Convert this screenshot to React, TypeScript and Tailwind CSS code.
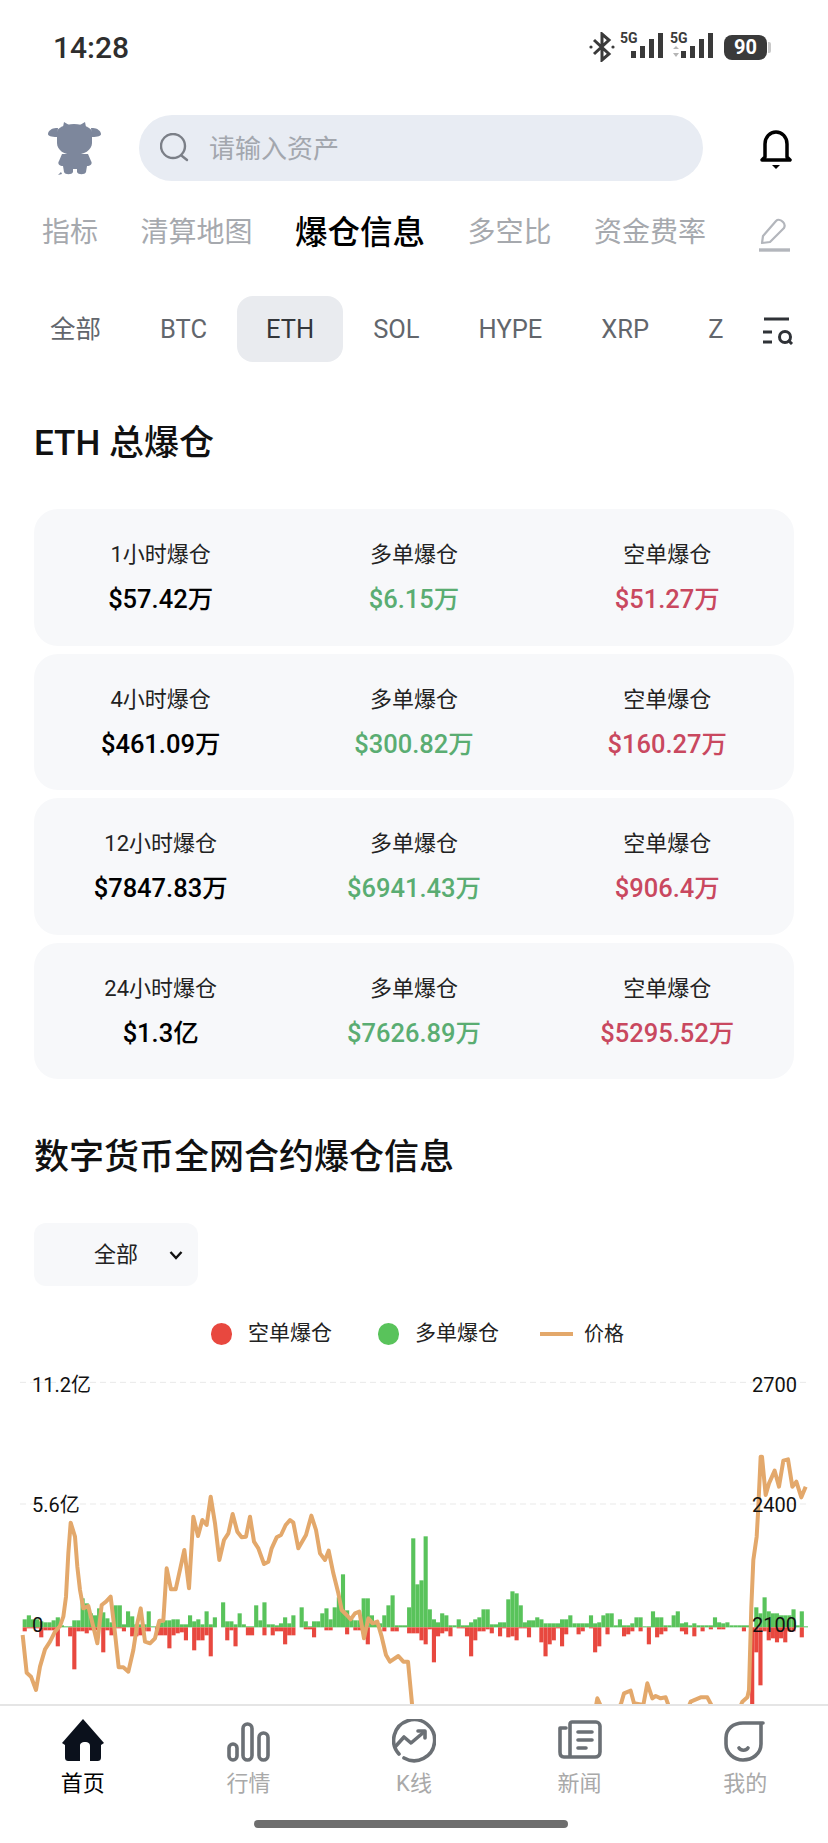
const greenBars = [
  8, 12, 8, 8, 6, 5, 5, 7, 10, 2, 1, 1, 7, 7, 29, 24, 14, 12, 19, 15, 9, 5, 22, 22, 3, 16, 11, 3, 3, 3, 16, 1, 1, 5, 7, 7, 8, 8, 3, 3, 12, 6, 8, 3, 16, 3, 10, 0,
  25, 6, 6, 3, 14, 3, 1, 1, 22, 7, 25, 3, 3, 2, 4, 10, 4, 12, 0, 20, 6, 1, 6, 6, 14, 19, 8, 20, 30, 53, 17, 8, 7, 7, 29, 29, 12, 4, 4, 12, 22, 32, 2, 2, 2, 20, 89,
  43, 47, 91, 18, 8, 5, 14, 12, 2, 2, 8, 2, 2, 5, 8, 10, 18, 18, 3, 3, 5, 5, 28, 36, 34, 22, 5, 7, 7, 10, 8, 4, 4, 4, 4, 8, 8, 12, 4, 4, 4, 4, 12, 4, 5, 12, 14, 14,
  2, 8, 2, 2, 4, 10, 10, 1, 1, 16, 10, 10, 2, 2, 12, 16, 4, 5, 2, 4, 2, 2, 2, 2, 10, 5, 4, 5, 2, 2, 2, 2, 2, 0, 20, 14, 30, 16, 14, 14, 12, 12, 12, 18, 2, 16, 1,
];

const redBars = [
  4, 1, 1, 1, 10, 3, 3, 3, 19, 0, 0, 9, 42, 4, 4, 6, 3, 3, 0, 25, 3, 8, 1, 1, 4, 0, 9, 9, 8, 4, 4, 0, 8, 8, 8, 21, 8, 6, 5, 13, 0, 23, 13, 13, 8, 29, 0, 0,
  0, 13, 3, 19, 0, 0, 8, 8, 0, 0, 8, 0, 8, 4, 4, 17, 8, 8, 0, 0, 2, 2, 10, 0, 0, 3, 3, 0, 0, 0, 7, 0, 3, 3, 6, 17, 0, 0, 0, 4, 0, 4, 4, 0, 0, 6, 6,
  6, 13, 17, 2, 35, 9, 6, 4, 9, 0, 1, 1, 9, 29, 13, 4, 4, 2, 6, 0, 9, 1, 10, 9, 13, 1, 1, 10, 0, 0, 15, 29, 17, 13, 1, 19, 7, 0, 0, 7, 4, 0, 1, 25, 19, 0, 7, 0,
  0, 0, 9, 7, 4, 0, 4, 0, 17, 0, 10, 7, 4, 0, 0, 0, 4, 7, 0, 9, 0, 4, 0, 2, 0, 2, 2, 0, 0, 0, 0, 4, 0, 90, 25, 58, 4, 13, 11, 15, 11, 15, 4, 4, 0, 10, 0,
];

const priceLine =
  "68,885 80,998 93,1010 108,1050 120,980 135,928 150,905 165,875 180,858 190,830 198,770 205,640 212,548 225,590 232,680 240,750 250,805 265,798 275,840 292,910 305,795 318,785 332,770 345,880 356,982 370,982 385,995 400,930 412,850 422,805 435,905 450,910 465,895 478,842 490,842 500,685 513,748 527,748 553,630 567,745 580,530 594,588 607,540 620,555 632,470 645,550 658,660 672,600 685,580 698,522 712,575 725,592 738,590 750,530 762,605 775,625 792,672 805,665 815,625 830,592 843,585 857,555 870,540 880,548 895,625 918,585 934,527 948,570 960,640 975,660 986,632 1000,700 1015,760 1025,810 1040,825 1052,838 1065,820 1078,815 1092,895 1105,835 1118,850 1132,845 1145,890 1158,945 1170,965 1195,948 1210,965 1224,965 1235,1080 1245,1200 1770,1200 1792,1075 1810,1115 1862,1095 1872,1060 1892,1052 1902,1090 1930,1095 1942,1030 1957,1075 1967,1068 1982,1075 1997,1072 2012,1115 2060,1115 2072,1085 2102,1072 2122,1072 2142,1110 2215,1115 2227,1085 2242,1072 2247,1050 2254,800 2260,660 2270,590 2274,520 2282,350 2286,350 2297,465 2307,430 2324,392 2337,440 2350,362 2364,358 2377,440 2389,425 2404,472 2417,440";

const summaryRows = [
  { label: "1小时爆仓", total: "$57.42万", long: "$6.15万", short: "$51.27万" },
  { label: "4小时爆仓", total: "$461.09万", long: "$300.82万", short: "$160.27万" },
  { label: "12小时爆仓", total: "$7847.83万", long: "$6941.43万", short: "$906.4万" },
  { label: "24小时爆仓", total: "$1.3亿", long: "$7626.89万", short: "$5295.52万" },
];

const topTabs = ["指标", "清算地图", "爆仓信息", "多空比", "资金费率"];
const coins = ["全部", "BTC", "ETH", "SOL", "HYPE", "XRP", "Z"];

function Signal({ arrows }: { arrows?: boolean }) {
  return (
    <div className="relative h-[30px] w-[43px]">
      <span className="absolute left-0 top-[-1px] text-[14px] leading-[14px] font-bold text-[#3a3a3a]">5G</span>
      <svg className="absolute left-0 top-0" width="43" height="30" viewBox="0 0 43 30" fill="#3a3a3a">
        {arrows && <path d="M3 17l3-3 3 3zM3 21h6l-3 4z" fill="#b5b5b5" />}
        <rect x="11" y="19" width="5" height="7" />
        <rect x="20" y="14" width="5" height="12" />
        <rect x="29" y="7" width="5" height="19" />
        <rect x="38" y="1" width="5" height="25" />
      </svg>
    </div>
  );
}

function StatusBar() {
  return (
    <div className="flex h-[94px] shrink-0 items-center justify-between pl-[53px] pr-[57px]">
      <span className="text-[30px] font-medium text-[#2e2e2e]">14:28</span>
      <div className="flex items-center">
        <svg width="26" height="30" viewBox="0 0 26 30" fill="none" stroke="#3a3a3a" strokeWidth="3">
          <path d="M5 8l15 14-7 6V2l7 6L5 22" />
          <circle cx="2" cy="15" r="1.6" fill="#3a3a3a" stroke="none" />
          <circle cx="24" cy="15" r="1.6" fill="#3a3a3a" stroke="none" />
        </svg>
        <div className="ml-[5px]">
          <Signal />
        </div>
        <div className="ml-[7px]">
          <Signal arrows />
        </div>
        <div className="ml-[11px] flex h-[25px] w-[43px] items-center justify-center rounded-[8px] bg-[#3a3a3a] text-[20px] font-bold text-white">
          90
        </div>
        <div className="ml-[1px] h-[11px] w-[3px] rounded-r-[2px] bg-[#c9c9c9]" />
      </div>
    </div>
  );
}

function Mascot() {
  return (
    <svg width="53" height="56" viewBox="0 0 53 56" fill="#7d879c">
      <path d="M15 7l1-5 5 3h11l5-3 1 5z" />
      <path d="M10 8h-2C4 8 0 11 0 14c0 2 3 3 9 3zM43 8h2c4 0 8 3 8 6 0 2-3 3-9 3z" />
      <path d="M9 12c0-4 8-8 17-8s18 4 18 8v11c0 7-8 12-18 12S9 30 9 23z" />
      <path d="M14 34h26l3 7c2 3-1 5-4 5l-1 6c-1 3-8 3-9 0v-3h-4v3c-1 3-8 3-9 0l-1-6c-3 0-6-2-4-5z" />
      <path d="M10 55l3-3 1 2z" />
    </svg>
  );
}

function SearchHeader() {
  return (
    <div className="mt-[21px] flex h-[66px] shrink-0 items-center pl-[48px]">
      <Mascot />
      <div className="ml-[38px] flex h-[66px] w-[564px] items-center rounded-full bg-[#e8ecf3] pl-[21px]">
        <svg width="30" height="30" viewBox="0 0 30 30" fill="none" stroke="#7b7f87" strokeWidth="2.4" strokeLinecap="round">
          <circle cx="13" cy="13" r="12" />
          <path d="M22 23l5 4" />
        </svg>
        <span className="ml-[19px] pt-[2px] text-[26px] text-[#a3a7ae]">请输入资产</span>
      </div>
      <svg className="ml-[56px] mt-[4px]" width="34" height="40" viewBox="0 0 34 40" fill="none" stroke="#000" strokeWidth="3.5" strokeLinejoin="round">
        <path d="M6 27V14C6 7 11 2 17 2s11 5 11 12v13l3 3H3z" />
        <path d="M13 35h8l-4 4z" fill="#000" stroke="none" />
      </svg>
    </div>
  );
}

function TopTabs() {
  return (
    <div className="mt-[32px] flex h-[40px] shrink-0 items-center pl-[42px]">
      <div className="flex items-center gap-[42.5px]">
        {topTabs.map((tab) =>
          tab === "爆仓信息" ? (
            <span key={tab} className="text-[32.5px] font-medium text-black">
              {tab}
            </span>
          ) : (
            <span key={tab} className="text-[28px] text-[#a6a9ae]">
              {tab}
            </span>
          ),
        )}
      </div>
      <svg className="ml-[52px] mt-[3px]" width="33" height="34" viewBox="0 0 33 34" fill="none" stroke="#b3b6bc" strokeWidth="2.2" strokeLinejoin="round">
        <path d="M4 25l1-7L18 3c2-2 5-1 7 1s2 4 1 6L12 24z" />
        <path d="M1 32h31" strokeWidth="3.4" />
      </svg>
    </div>
  );
}

function CoinChips() {
  return (
    <div className="mt-[43px] flex h-[66px] shrink-0 items-center pl-[21px] pr-[34px]">
      <div className="flex min-w-0 flex-1 items-center gap-[1px] overflow-hidden">
        {coins.map((coin) =>
          coin === "ETH" ? (
            <div key={coin} className="flex h-[66px] shrink-0 items-center rounded-[16px] bg-[#e9ebef] px-[29px] text-[25.5px] whitespace-nowrap text-[#33363a]">
              {coin}
            </div>
          ) : (
            <div key={coin} className="flex h-[66px] shrink-0 items-center px-[29px] text-[25.5px] whitespace-nowrap text-[#62666c]">
              {coin}
            </div>
          ),
        )}
      </div>
      <svg className="ml-[10px] mt-[3px] shrink-0" width="31" height="28" viewBox="0 0 31 28" fill="none" stroke="#2f3237" strokeWidth="3">
        <path d="M1 2h25M0 15h9M0 25h9" />
        <circle cx="22" cy="20" r="5.5" />
        <path d="M25 23l4 4" />
      </svg>
    </div>
  );
}

function SummaryCell({ label, value, color }: { label: string; value: string; color: string }) {
  return (
    <div className="flex flex-col items-center">
      <span className="text-[22px] leading-[30px] text-[#222]">{label}</span>
      <span className={`mt-[14px] text-[25.5px] leading-[30px] font-medium ${color}`}>{value}</span>
    </div>
  );
}

function SummaryCards() {
  return (
    <div className="mt-[41px] flex flex-col gap-[8px] px-[34px]">
      {summaryRows.map((row) => (
        <div key={row.label} className="grid h-[136.5px] grid-cols-3 items-center rounded-[24px] bg-[#f7f8fa]">
          <SummaryCell label={row.label} value={row.total} color="text-black" />
          <SummaryCell label="多单爆仓" value={row.long} color="text-[#5aad72]" />
          <SummaryCell label="空单爆仓" value={row.short} color="text-[#c9485f]" />
        </div>
      ))}
    </div>
  );
}

function Legend() {
  return (
    <div className="mt-[33px] flex h-[30px] shrink-0 items-center pl-[211px] text-[21px] text-[#222]">
      <span className="h-[22px] w-[21px] rounded-full bg-[#e8483f]" />
      <span className="ml-[16px]">空单爆仓</span>
      <span className="ml-[46px] h-[22px] w-[21px] rounded-full bg-[#59c35b]" />
      <span className="ml-[16px]">多单爆仓</span>
      <span className="ml-[41px] h-[4px] w-[33px] bg-[#e3a86b]" />
      <span className="ml-[11px] text-[20px]">价格</span>
    </div>
  );
}

function LiquidationChart() {
  return (
    <div className="relative mt-[11px] min-h-0 flex-1 overflow-hidden">
      <svg className="block" width="828" height="344" viewBox="0 60 2484 1032">
        <path d="M60 127H2422M60 492H2422" stroke="#e9e9e9" strokeWidth="3" strokeDasharray="18 12" />
        {greenBars.map((h, i) => (
          <rect key={i} x={68 + i * 12.4} y={862 - h * 3} width="12.4" height={h * 3} fill="#59c35b" />
        ))}
        {redBars.map((h, i) => (
          <rect key={i} x={68 + i * 12.4} y={862} width="12.4" height={h * 3} fill="#e8483f" />
        ))}
        <polyline points={priceLine} fill="none" stroke="#e3a86b" strokeWidth="12" strokeLinejoin="round" />
      </svg>
      <span className="absolute left-[32px] top-[11px] text-[20px] leading-[28px] text-[#111]">11.2亿</span>
      <span className="absolute left-[32px] top-[131px] text-[20px] leading-[28px] text-[#111]">5.6亿</span>
      <span className="absolute left-[32px] top-[251px] text-[20px] leading-[28px] text-[#111]">0</span>
      <span className="absolute left-[752px] top-[11px] text-[20px] leading-[28px] text-[#111]">2700</span>
      <span className="absolute left-[752px] top-[131px] text-[20px] leading-[28px] text-[#111]">2400</span>
      <span className="absolute left-[752px] top-[251px] text-[20px] leading-[28px] text-[#111]">2100</span>
    </div>
  );
}

const navItems = [
  {
    label: "首页",
    active: true,
    icon: (
      <path
        d="M22 0l21 24-3 2v12c0 3-1 4-4 4h-7V27c0-3-2-4-5-4s-5 1-5 4v15H8c-3 0-4-1-4-4V26l-3-2z"
        fill="#0b111c"
      />
    ),
  },
  {
    label: "行情",
    icon: (
      <g fill="none" stroke="#6b7075" strokeWidth="3.6">
        <rect x="3" y="25" width="8" height="16" rx="4" />
        <rect x="17" y="5" width="9" height="36" rx="4.5" />
        <rect x="33" y="14" width="9" height="27" rx="4.5" />
      </g>
    ),
  },
  {
    label: "K线",
    icon: (
      <g fill="none" stroke="#6b7075" strokeWidth="3.6" strokeLinecap="round" strokeLinejoin="round">
        <path d="M7 35A20.5 20.5 0 1 1 12 39" />
        <path d="M3 28l9-10 7 6 13-11" />
        <path d="M26 12h7v7" />
      </g>
    ),
  },
  {
    label: "新闻",
    icon: (
      <g fill="none" stroke="#6b7075" strokeWidth="3.6" strokeLinecap="round" strokeLinejoin="round">
        <path d="M12 38V5c0-1 1-2 2-2h24c2 0 4 2 4 4v26c0 3-2 5-5 5H6c-3 0-4-2-4-5V9h6" />
        <path d="M20 13h14M20 21h14M20 29h8" />
      </g>
    ),
  },
  {
    label: "我的",
    icon: (
      <g fill="none" stroke="#6b7075" strokeWidth="3.6" strokeLinecap="round">
        <path d="M40 4H20C10 4 3 10 3 19v6c0 9 8 16 17 16s18-6 18-16V4" />
        <path d="M16 29c2 3 7 3 9 0" />
      </g>
    ),
  },
];

function BottomNav() {
  return (
    <div className="h-[139px] shrink-0 border-t-2 border-[#e5e5e5] bg-white">
      <div className="grid grid-cols-5 pt-[13px]">
        {navItems.map((item) => (
          <div key={item.label} className="flex flex-col items-center">
            <svg width="44" height="44" viewBox="0 0 44 44">
              {item.icon}
            </svg>
            <span className={`mt-[6px] text-[22px] leading-[30px] ${item.active ? "text-black" : "text-[#a9a9a9]"}`}>
              {item.label}
            </span>
          </div>
        ))}
      </div>
      <div className="ml-[254px] mt-[21px] h-[8px] w-[314px] rounded-full bg-[#6e6e6e]" />
    </div>
  );
}

export default function App() {
  return (
    <div className="flex h-[1843px] w-[828px] flex-col overflow-hidden bg-white font-[Roboto,'Noto_Sans_CJK_SC',sans-serif]">
      <StatusBar />
      <SearchHeader />
      <TopTabs />
      <CoinChips />
      <h1 className="mt-[58px] shrink-0 px-[34px] text-[35px] leading-[48px] font-medium text-[#111]">ETH 总爆仓</h1>
      <SummaryCards />
      <h2 className="mt-[55px] shrink-0 px-[34px] text-[35px] leading-[48px] font-medium text-[#111]">数字货币全网合约爆仓信息</h2>
      <div className="mt-[41px] ml-[34px] flex h-[63px] w-[164px] shrink-0 items-center rounded-[12px] bg-[#f7f8fa] pl-[60px]">
        <span className="text-[22px] text-[#222]">全部</span>
        <svg className="ml-[31px]" width="14" height="10" viewBox="0 0 14 10" fill="none" stroke="#111" strokeWidth="2.4">
          <path d="M1.5 2l5.5 6 5.5-6" />
        </svg>
      </div>
      <Legend />
      <LiquidationChart />
      <BottomNav />
    </div>
  );
}
